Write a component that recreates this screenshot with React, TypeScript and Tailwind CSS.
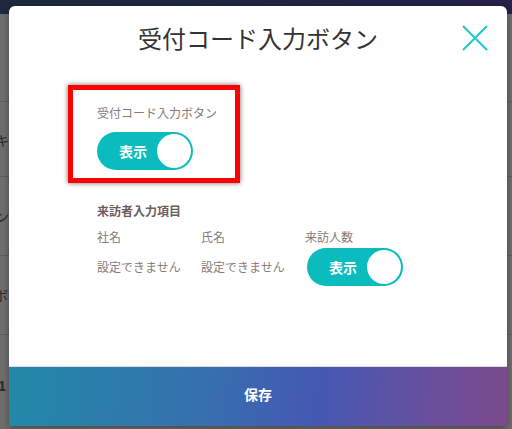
import React from "react";

const jp = { fontFamily: '"Noto Sans CJK JP", "Noto Sans", sans-serif' };

function Toggle() {
  return (
    <div className="flex h-[38px] w-[96px] items-center justify-between rounded-full bg-[#0bbcbf] pl-[22px] pr-[2px]">
      <span className="text-[14px] font-bold leading-none text-white">表示</span>
      <span className="h-[34px] w-[34px] rounded-full bg-white" />
    </div>
  );
}

export default function App() {
  return (
    <div style={jp} className="relative h-[429px] w-[512px] overflow-hidden bg-[#6d6d6d]">
      {/* dimmed page behind the modal */}
      <div className="h-[14px] w-full bg-[linear-gradient(90deg,#1d2a3d,#24214a)]" />
      <div className="flex flex-col text-[14px] text-[#2b2b2b]">
        <div className="h-[88px] border-b border-[#5e5e5e]" />
        <div className="flex h-[75px] items-center border-b border-[#5e5e5e] pt-[2px]">
          <span className="ml-[-5px]">キ</span>
        </div>
        <div className="flex h-[79px] items-center border-b border-[#5e5e5e]">
          <span className="ml-[-5px]">ン</span>
        </div>
        <div className="flex h-[79px] items-center border-b border-[#5e5e5e]">
          <span className="ml-[-6px]">ボ</span>
        </div>
        <div className="flex h-[100px] items-center">
          <span className="ml-[-2px] font-bold">1</span>
        </div>
      </div>

      {/* modal */}
      <div className="absolute left-[9px] top-[6px] flex h-[420px] w-[498px] flex-col overflow-hidden rounded-t-[6px] bg-white shadow-[0_2px_6px_rgba(0,0,0,0.35)]">
        <div className="relative flex h-[64px] items-center justify-center">
          <h1 className="text-[24px] font-normal leading-none text-[#333333]">受付コード入力ボタン</h1>
          <button className="absolute right-[19px] top-[19px] h-[26px] w-[26px]">
            <svg viewBox="0 0 26 26" width="26" height="26">
              <path d="M1 1 L25 25 M25 1 L1 25" stroke="#1fc6ce" strokeWidth="2" fill="none" />
            </svg>
          </button>
        </div>

        <div className="relative flex flex-col pl-[88px]">
          <div className="pointer-events-none absolute left-[59px] top-[15px] h-[98px] w-[172px] border-[5px] border-[#ff0000] shadow-[0_0_5px_rgba(0,0,0,0.6)]" />
          <div className="mt-[35px] text-[12px] leading-[16px] text-[#8b7878]">受付コード入力ボタン</div>
          <div className="mt-[11px]">
            <Toggle />
          </div>

          <div className="mt-[33px] text-[12px] font-bold leading-[16px] text-[#6f5c5c]">来訪者入力項目</div>
          <div className="mt-[10px] grid grid-cols-[104px_104px_104px] text-[12px] leading-[16px] text-[#8b7878]">
            <div>社名</div>
            <div>氏名</div>
            <div>来訪人数</div>
          </div>
          <div className="mt-[3px] grid grid-cols-[104px_104px_104px] items-center text-[12px] leading-[16px] text-[#8b7878]">
            <div>設定できません</div>
            <div>設定できません</div>
            <div className="pl-[2px]">
              <Toggle />
            </div>
          </div>
        </div>

        <div className="mt-auto border-t border-[#dddddd]">
          <button className="flex h-[59px] w-full items-center justify-center bg-[linear-gradient(95deg,#2289a8_0%,#3571ae_38%,#4558b3_62%,#6a4f9c_85%,#7b4a8c_100%)] pb-[4px] text-[14px] font-bold text-white">
            保存
          </button>
        </div>
      </div>
    </div>
  );
}
